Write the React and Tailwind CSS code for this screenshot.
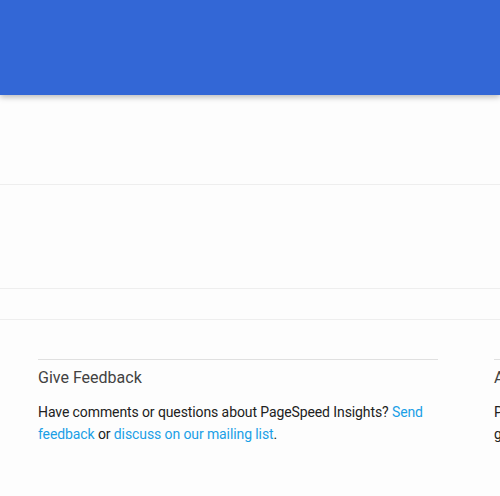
export default function App() {
  return (
    <div className="w-[500px] h-[496px] overflow-hidden bg-[#fdfdfd] font-['Roboto','Liberation_Sans',sans-serif]">
      {/* Barra superior */}
      <header className="relative z-10 h-[95px] bg-[#3367d6] shadow-[0_2px_6px_rgba(0,0,0,0.28)]" />

      {/* Blocos vazios */}
      <div className="h-[90px] border-b border-[#eeeeee]" />
      <div className="h-[104px] border-b border-[#eeeeee]" />
      <div className="h-[31px] border-b border-[#eeeeee]" />

      {/* Rodapé */}
      <div className="flex gap-[56px] pl-[38px] pt-[39px] w-[1200px]">
        <div className="w-[400px] shrink-0 border-t border-[#e0e0e0]">
          <h3 className="mt-[7px] text-[16px] leading-[22px] text-[#424242]">Give Feedback</h3>
          <p className="mt-[12px] text-[14px] leading-[22px] tracking-[-0.1px] text-[#212121]">
            Have comments or questions about PageSpeed Insights?{" "}
            <a className="text-[#1a9fe6]">Send feedback</a> or{" "}
            <a className="text-[#1a9fe6]">discuss on our mailing list</a>.
          </p>
        </div>
        <div className="w-[400px] shrink-0 border-t border-[#e0e0e0]">
          <h3 className="mt-[7px] text-[16px] leading-[22px] text-[#424242]">About PageSpeed Insights</h3>
          <p className="mt-[12px] text-[14px] leading-[22px] tracking-[-0.1px] text-[#212121]">
            PageSpeed Insights analyzes the content of a web page, then generates suggestions to make that page faster.
          </p>
        </div>
      </div>
    </div>
  );
}
